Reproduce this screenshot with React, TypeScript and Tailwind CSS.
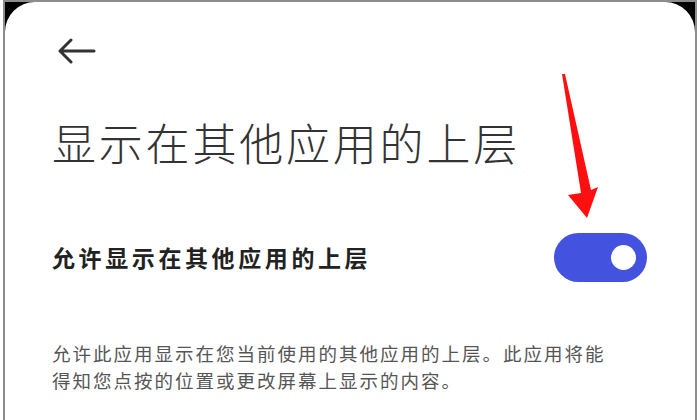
import React from "react";

export default function App() {
  const cjk = { fontFamily: '"Noto Sans CJK SC", "Noto Sans", sans-serif' };
  return (
    <div className="w-[700px] h-[420px] bg-white overflow-hidden relative" style={cjk}>
      <div className="ml-[3px] w-[694px] h-[420px] bg-black border-l-2 border-r-2 border-t-2 border-[#8c8c8c]">
        <div className="h-full bg-white rounded-t-[30px] pl-[47px] flex flex-col">
          <svg width="40" height="26" viewBox="0 0 40 26" className="mt-[36px] ml-[5px]">
            <path d="M37 13 H4 M14 2 L3 13 L14 24" fill="none" stroke="#333" strokeWidth="3" strokeLinecap="round" strokeLinejoin="round" />
          </svg>
          <div className="mt-[53px] text-[44px] leading-[50px] tracking-[2.8px] text-[#333] font-light whitespace-nowrap">
            显示在其他应用的上层
          </div>
          <div className="mt-[64px] h-[52px] flex items-center justify-between pr-[48px]">
            <div className="text-[23px] font-bold tracking-[3.6px] text-[#222] whitespace-nowrap">
              允许显示在其他应用的上层
            </div>
            <div className="w-[93px] h-[49px] rounded-full bg-[#4453df] flex items-center justify-end pr-[11px]">
              <div className="w-[25px] h-[25px] rounded-full bg-white" />
            </div>
          </div>
          <div className="mt-[57px] text-[18.5px] leading-[27px] tracking-[2px] text-[#555] whitespace-nowrap">
            <div>允许此应用显示在您当前使用的其他应用的上层。此应用将能</div>
            <div>得知您点按的位置或更改屏幕上显示的内容。</div>
          </div>
        </div>
      </div>
      <svg className="absolute left-0 top-0 pointer-events-none" width="700" height="420" viewBox="0 0 700 420">
        <polygon points="562,74 565,74 591,190 598,187 587,218 568,195 581,193" fill="#ff1010" />
      </svg>
    </div>
  );
}
